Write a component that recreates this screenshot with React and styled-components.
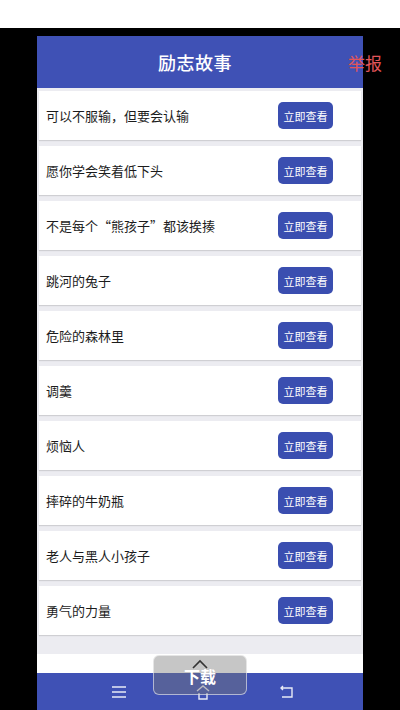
import styled, { createGlobalStyle } from "styled-components";

const GlobalStyle = createGlobalStyle`
  html, body {
    margin: 0;
    padding: 0;
    background: #000;
    font-family: "Noto Sans CJK SC", "Noto Sans", sans-serif;
  }
`;

const stories = [
  "可以不服输，但要会认输",
  "愿你学会笑着低下头",
  "不是每个“熊孩子”都该挨揍",
  "跳河的兔子",
  "危险的森林里",
  "调羹",
  "烦恼人",
  "摔碎的牛奶瓶",
  "老人与黑人小孩子",
  "勇气的力量",
];

const Page = styled.div`
  width: 400px;
  height: 710px;
  display: flex;
  flex-direction: column;
  overflow: hidden;
  position: relative;
`;

const TopStrip = styled.div`
  height: 28px;
  background: #fff;
`;

const Screen = styled.div`
  flex: 1;
  background: #000;
  padding: 8px 37px 0;
  display: flex;
`;

const Phone = styled.div`
  width: 326px;
  display: flex;
  flex-direction: column;
  background: #fff;
`;

const Header = styled.header`
  height: 52px;
  background: #3f51b5;
  display: flex;
  align-items: center;
  justify-content: center;
  position: relative;
`;

const Title = styled.h1`
  margin: 0 0 0 -10px;
  color: #fff;
  font-size: 18px;
  font-weight: 500;
  letter-spacing: 0.5px;
`;

const Report = styled.span`
  position: absolute;
  right: -19px;
  top: 14px;
  color: #e2555a;
  font-size: 17px;
`;

const Content = styled.main`
  flex: 1;
  background: #fff;
`;

const List = styled.ul`
  list-style: none;
  margin: 0;
  padding: 3px 0 0;
  height: 563px;
  overflow: hidden;
  background: #ececf1;
`;

const Row = styled.li`
  height: 49px;
  margin: 0 2px 6px;
  background: #fff;
  box-shadow: 0 1px 1px rgba(0, 0, 0, 0.12);
  display: flex;
  align-items: center;
  justify-content: space-between;
  padding: 0 28px 0 7px;
`;

const RowTitle = styled.span`
  font-size: 13px;
  color: #1c1c1c;
`;

const ViewButton = styled.button`
  width: 55px;
  height: 27px;
  border: none;
  border-radius: 5px;
  background: #3a4eb0;
  color: #fff;
  font-family: inherit;
  font-size: 11px;
  padding: 0;
`;

const NavBar = styled.nav`
  height: 37px;
  background: #3f51b5;
  display: flex;
  align-items: center;
  justify-content: space-between;
  padding: 0 68px 0 74px;
`;

const NavIcon = styled.svg`
  width: 16px;
  height: 16px;
  stroke: #e8eaf6;
  stroke-width: 1.4;
  fill: none;
`;

const Download = styled.div`
  position: absolute;
  left: 153px;
  top: 655px;
  width: 92px;
  height: 38px;
  border-radius: 6px;
  border: 1px solid rgba(255, 255, 255, 0.55);
  background: rgba(120, 120, 120, 0.42);
  display: flex;
  flex-direction: column;
  align-items: center;
`;

const Chevron = styled.svg`
  width: 20px;
  height: 12px;
  margin-top: 2px;
  stroke: #333;
  stroke-width: 1.6;
  fill: none;
`;

const DownloadText = styled.span`
  color: #fff;
  font-size: 16px;
  font-weight: 700;
  line-height: 18px;
  margin-top: -3px;
`;

export default function App() {
  return (
    <Page>
      <GlobalStyle />
      <TopStrip />
      <Screen>
        <Phone>
          <Header>
            <Title>励志故事</Title>
            <Report>举报</Report>
          </Header>
          <Content>
            <List>
              {stories.map((story) => (
                <Row key={story}>
                  <RowTitle>{story}</RowTitle>
                  <ViewButton>立即查看</ViewButton>
                </Row>
              ))}
            </List>
          </Content>
          <NavBar>
            <NavIcon viewBox="0 0 16 16">
              <path d="M1 3h14M1 8h14M1 13h14" />
            </NavIcon>
            <NavIcon viewBox="0 0 16 16">
              <path d="M2 7l6-5 6 5M4 9v6h8V9" />
            </NavIcon>
            <NavIcon viewBox="0 0 16 16">
              <path d="M4 2L2 4l2 2M2 4h11v9H3" />
            </NavIcon>
          </NavBar>
        </Phone>
      </Screen>
      <Download>
        <Chevron viewBox="0 0 20 12">
          <path d="M3 10l7-7 7 7" />
        </Chevron>
        <DownloadText>下载</DownloadText>
      </Download>
    </Page>
  );
}
